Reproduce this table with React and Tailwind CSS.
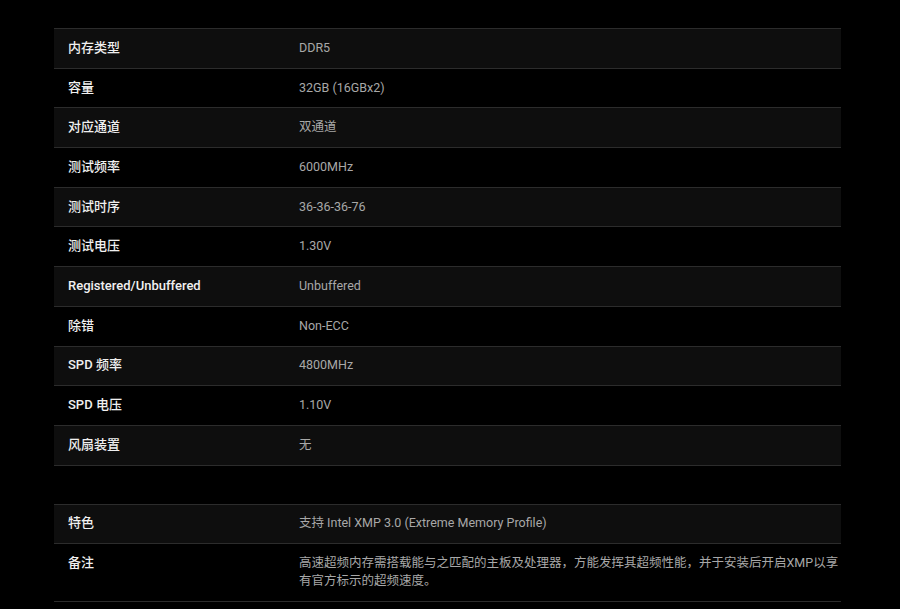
import React from 'react';

const specs = [
  ['内存类型', 'DDR5'],
  ['容量', '32GB (16GBx2)'],
  ['对应通道', '双通道'],
  ['测试频率', '6000MHz'],
  ['测试时序', '36-36-36-76'],
  ['测试电压', '1.30V'],
  ['Registered/Unbuffered', 'Unbuffered'],
  ['除错', 'Non-ECC'],
  ['SPD 频率', '4800MHz'],
  ['SPD 电压', '1.10V'],
  ['风扇装置', '无'],
];

const extras = [
  ['特色', '支持 Intel XMP 3.0 (Extreme Memory Profile)'],
  ['备注', '高速超频内存需搭载能与之匹配的主板及处理器，方能发挥其超频性能，并于安装后开启XMP以享有官方标示的超频速度。'],
];

function SpecTable({ rows }) {
  return (
    <div className="border-t border-[#2c2c2c]">
      {rows.map(([label, value], i) => (
        <div
          key={label}
          className={`flex border-b border-[#2c2c2c] ${i % 2 === 0 ? 'bg-[#0e0e0e]' : 'bg-black'}`}
        >
          <div className="w-[231px] shrink-0 pl-[14px] pt-[9.85px] pb-[10.85px] text-[13px] leading-[18px] font-medium text-[#f0f0f0]">
            {label}
          </div>
          <div className="flex-1 pl-[14px] pr-[2px] pt-[9.85px] pb-[10.85px] text-[12.5px] leading-[18px] text-[#a8a8a8]">
            {value}
          </div>
        </div>
      ))}
    </div>
  );
}

export default function App() {
  return (
    <div
      className="min-h-[609px] bg-black pt-[28px]"
      style={{ fontFamily: 'Roboto, "Noto Sans CJK SC", sans-serif' }}
    >
      <div className="w-[787px] ml-[54px]">
        <SpecTable rows={specs} />
        <div className="mt-[38px]">
          <SpecTable rows={extras} />
        </div>
      </div>
    </div>
  );
}
